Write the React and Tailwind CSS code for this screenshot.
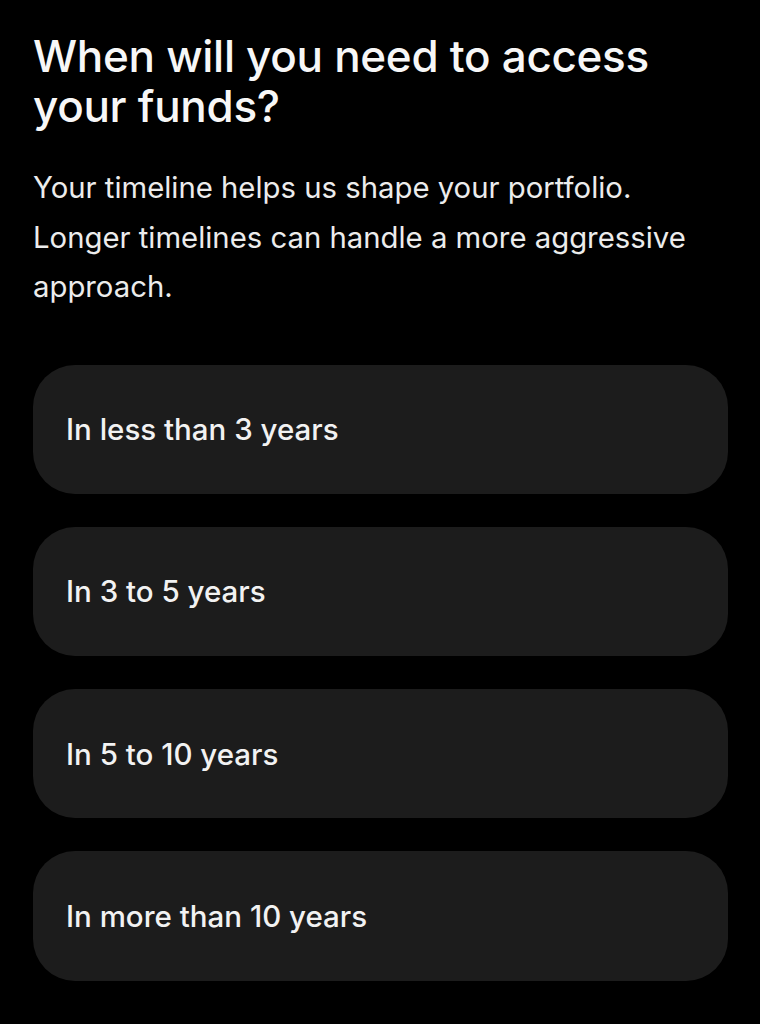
export default function App() {
  const options = [
    "In less than 3 years",
    "In 3 to 5 years",
    "In 5 to 10 years",
    "In more than 10 years",
  ];
  return (
    <div
      className="min-h-[1024px] w-[760px] bg-black text-white px-[33px] pt-[31px]"
      style={{ fontFamily: "Inter, 'Noto Sans', sans-serif" }}
    >
      <h1 className="text-[44px] leading-[50px] font-medium tracking-[-0.3px] text-[#f7f7f7] pr-[40px]">
        When will you need to access your funds?
      </h1>
      <p className="mt-[32px] text-[29.3px] leading-[49.5px] font-normal text-[#ececec]">
        Your timeline helps us shape your portfolio. Longer timelines can handle a more aggressive approach.
      </p>
      <div className="mt-[53px] flex flex-col gap-[33px] w-[695px]">
        {options.map((o) => (
          <div
            key={o}
            className="h-[129.3px] rounded-[42px] bg-[#1c1c1c] flex items-center px-[33px] text-[29.5px] font-medium text-[#f2f2f2]"
          >
            {o}
          </div>
        ))}
      </div>
    </div>
  );
}
